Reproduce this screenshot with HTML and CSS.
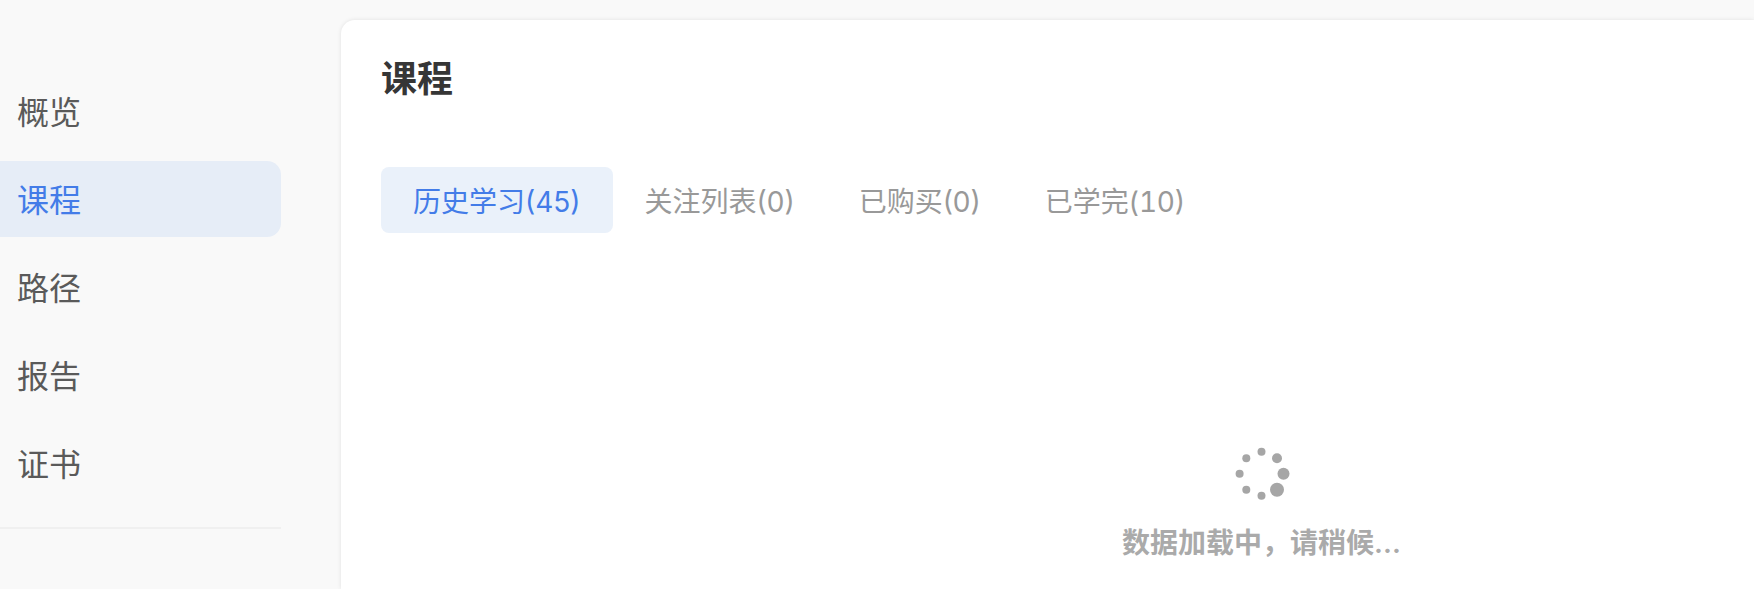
FILE: index.html
```html
<!DOCTYPE html>
<html lang="zh-CN">
<head>
<meta charset="utf-8">
<title>课程</title>
<link rel="stylesheet" href="styles.css">
</head>
<body>
<div class="layout">
  <aside class="sidebar">
    <nav class="nav">
      <a class="nav-item">概览</a>
      <a class="nav-item active">课程</a>
      <a class="nav-item">路径</a>
      <a class="nav-item">报告</a>
      <a class="nav-item">证书</a>
    </nav>
    <div class="nav-divider"></div>
  </aside>
  <main class="card">
    <h1 class="title">课程</h1>
    <div class="tabs">
      <span class="tab active">历史学习(45)</span>
      <span class="tab">关注列表(0)</span>
      <span class="tab">已购买(0)</span>
      <span class="tab">已学完(<span class="tabular">1</span>0)</span>
    </div>
    <div class="loading">
      <svg class="spinner" width="60" height="60" viewBox="0 0 60 60" aria-hidden="true">
        <circle cx="29.5" cy="7.7" r="4"/>
        <circle cx="45" cy="14.3" r="5"/>
        <circle cx="51.5" cy="29.7" r="6"/>
        <circle cx="45" cy="45.7" r="7"/>
        <circle cx="29.5" cy="51.7" r="4"/>
        <circle cx="14.3" cy="45.7" r="4"/>
        <circle cx="7.6" cy="29.7" r="4"/>
        <circle cx="14.3" cy="14.3" r="4"/>
      </svg>
      <p class="loading-text">数据加载中，请稍候...</p>
    </div>
  </main>
</div>
</body>
</html>
```
FILE: styles.css
```css
* { box-sizing: border-box; }
html, body { margin: 0; height: 100%; }
body {
  overflow: hidden;
  background: #f9f9f9;
  font-family: "Inter", "Noto Sans CJK SC", "Liberation Sans", sans-serif;
}
.layout { display: flex; height: 589px; }
.sidebar { flex: 0 0 281px; margin-right: 60px; padding-top: 73px; }
.nav { display: flex; flex-direction: column; gap: 12px; }
.nav-item {
  display: flex;
  align-items: center;
  height: 76px;
  padding: 0 0 3px 17px;
  border-radius: 0 14px 14px 0;
  font-size: 32px;
  color: #5a5a5a;
}
.nav-item.active { background: #e6edf7; color: #437ce8; }
.nav-divider { height: 2px; margin-top: 26px; background: #f0f0f0; }
.card {
  flex: 1;
  min-width: 0;
  margin-top: 20px;
  padding: 37px 40px 0;
  background: #fff;
  border-radius: 14px 0 0 0;
  box-shadow: 0 0 4px rgba(0, 0, 0, 0.1);
}
.title { margin: 0; font-size: 36px; line-height: 44px; font-weight: 700; color: #363636; }
.tabs { display: flex; margin-top: 66px; }
.tab {
  display: block;
  height: 66px;
  padding: 2px 32px 0;
  line-height: 66px;
  border-radius: 8px;
  font-size: 28px;
  color: #999;
}
.tabular { font-feature-settings: "tnum"; }
.tab.active { background: #eaf1fa; color: #437ce8; }
.loading { display: flex; flex-direction: column; align-items: center; margin: 211px 0 0 428px; }
.spinner { fill: #a6a6a6; display: block; }
.loading-text { margin: 19px 0 0; font-size: 28px; line-height: 40px; font-weight: 600; color: #aaa; }
```
